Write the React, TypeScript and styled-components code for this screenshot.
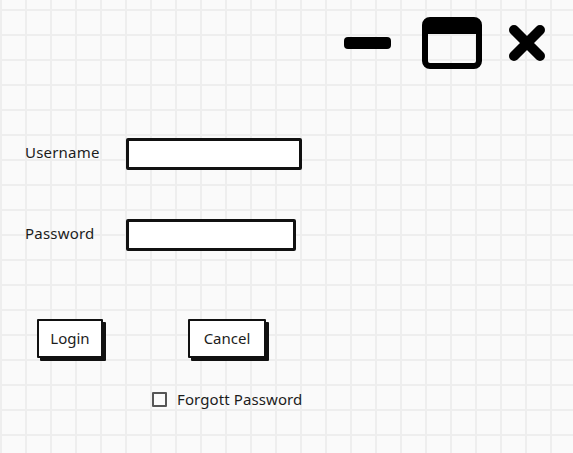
import React, { useState } from "react";
import styled, { createGlobalStyle } from "styled-components";

const GlobalStyle = createGlobalStyle`
  html, body {
    margin: 0;
    padding: 0;
    background: #fafafa;
  }
  * {
    box-sizing: border-box;
  }
`;

const Page = styled.div`
  width: 573px;
  height: 453px;
  overflow: hidden;
  font-family: "Noto Sans", "Open Sans", sans-serif;
  color: #1c1c1c;
  background-color: #fafafa;
  background-image:
    linear-gradient(to right, #eeeeee 2px, transparent 2px),
    linear-gradient(to bottom, #eeeeee 2px, transparent 2px);
  background-size: 25px 25px;
  background-position: 0px 9px;
`;

const TitleBar = styled.div`
  display: flex;
  justify-content: flex-end;
  align-items: center;
  height: 52px;
  margin-top: 17px;
  padding-right: 26px;
`;

const WinButton = styled.button<{ $gap?: number }>`
  display: flex;
  padding: 0;
  border: none;
  background: none;
  margin-left: ${({ $gap }) => $gap ?? 0}px;
  cursor: pointer;
`;

const Form = styled.div`
  display: grid;
  grid-template-columns: 101px auto;
  row-gap: 49px;
  align-items: center;
  margin-top: 69px;
  padding-left: 25px;
`;

const Label = styled.label`
  font-size: 15px;
  line-height: 20px;
  letter-spacing: 0.2px;
  padding-bottom: 4px;
`;

const Input = styled.input<{ $w: number }>`
  width: ${({ $w }) => $w}px;
  height: 32px;
  border: 3px solid #111;
  border-radius: 2px;
  background: #fff;
  outline: none;
  font: inherit;
  padding: 0 6px;
`;

const ButtonRow = styled.div`
  display: flex;
  gap: 85px;
  margin-top: 68px;
  padding-left: 37px;
`;

const SketchButton = styled.button<{ $w: number }>`
  width: ${({ $w }) => $w}px;
  height: 39px;
  border: 2px solid #111;
  border-radius: 1px;
  background: #fff;
  box-shadow: 3px 3px 0 #111;
  font-family: "Noto Sans", "Open Sans", sans-serif;
  font-size: 15px;
  color: #1c1c1c;
  padding: 0 0 2px;
  cursor: pointer;
`;

const CheckRow = styled.label`
  display: flex;
  align-items: center;
  gap: 10px;
  margin-top: 31px;
  padding-left: 152px;
  font-size: 15px;
  letter-spacing: 0.1px;
  cursor: pointer;
`;

const Box = styled.span<{ $on: boolean }>`
  width: 15px;
  height: 15px;
  border: 2px solid #555;
  border-radius: 1px;
  background: #fafafa;
  display: flex;
  align-items: center;
  justify-content: center;
  font-size: 11px;
  line-height: 1;
`;

const App: React.FC = () => {
  const [remember, setRemember] = useState(false);

  return (
    <Page>
      <GlobalStyle />
      <TitleBar>
        <WinButton aria-label="minimize">
          <svg width="47" height="12" viewBox="0 0 47 12">
            <rect x="0" y="0" width="47" height="12" rx="4" fill="#000" />
          </svg>
        </WinButton>
        <WinButton aria-label="maximize" $gap={31}>
          <svg width="60" height="52" viewBox="0 0 60 52">
            <rect x="3" y="3" width="54" height="46" rx="5" fill="none" stroke="#000" strokeWidth="6" />
            <rect x="2" y="2" width="56" height="15" rx="4" fill="#000" />
          </svg>
        </WinButton>
        <WinButton aria-label="close" $gap={25}>
          <svg width="40" height="38" viewBox="0 0 40 38">
            <path d="M7 6 L33 32 M33 6 L7 32" stroke="#000" strokeWidth="10" strokeLinecap="round" />
          </svg>
        </WinButton>
      </TitleBar>

      <Form>
        <Label htmlFor="user">Username</Label>
        <Input id="user" $w={176} />
        <Label htmlFor="pass">Password</Label>
        <Input id="pass" type="password" $w={170} />
      </Form>

      <ButtonRow>
        <SketchButton $w={66}>Login</SketchButton>
        <SketchButton $w={78}>Cancel</SketchButton>
      </ButtonRow>

      <CheckRow onClick={() => setRemember(!remember)}>
        <Box $on={remember}>{remember ? "✓" : ""}</Box>
        Forgott Password
      </CheckRow>
    </Page>
  );
};

export default App;
